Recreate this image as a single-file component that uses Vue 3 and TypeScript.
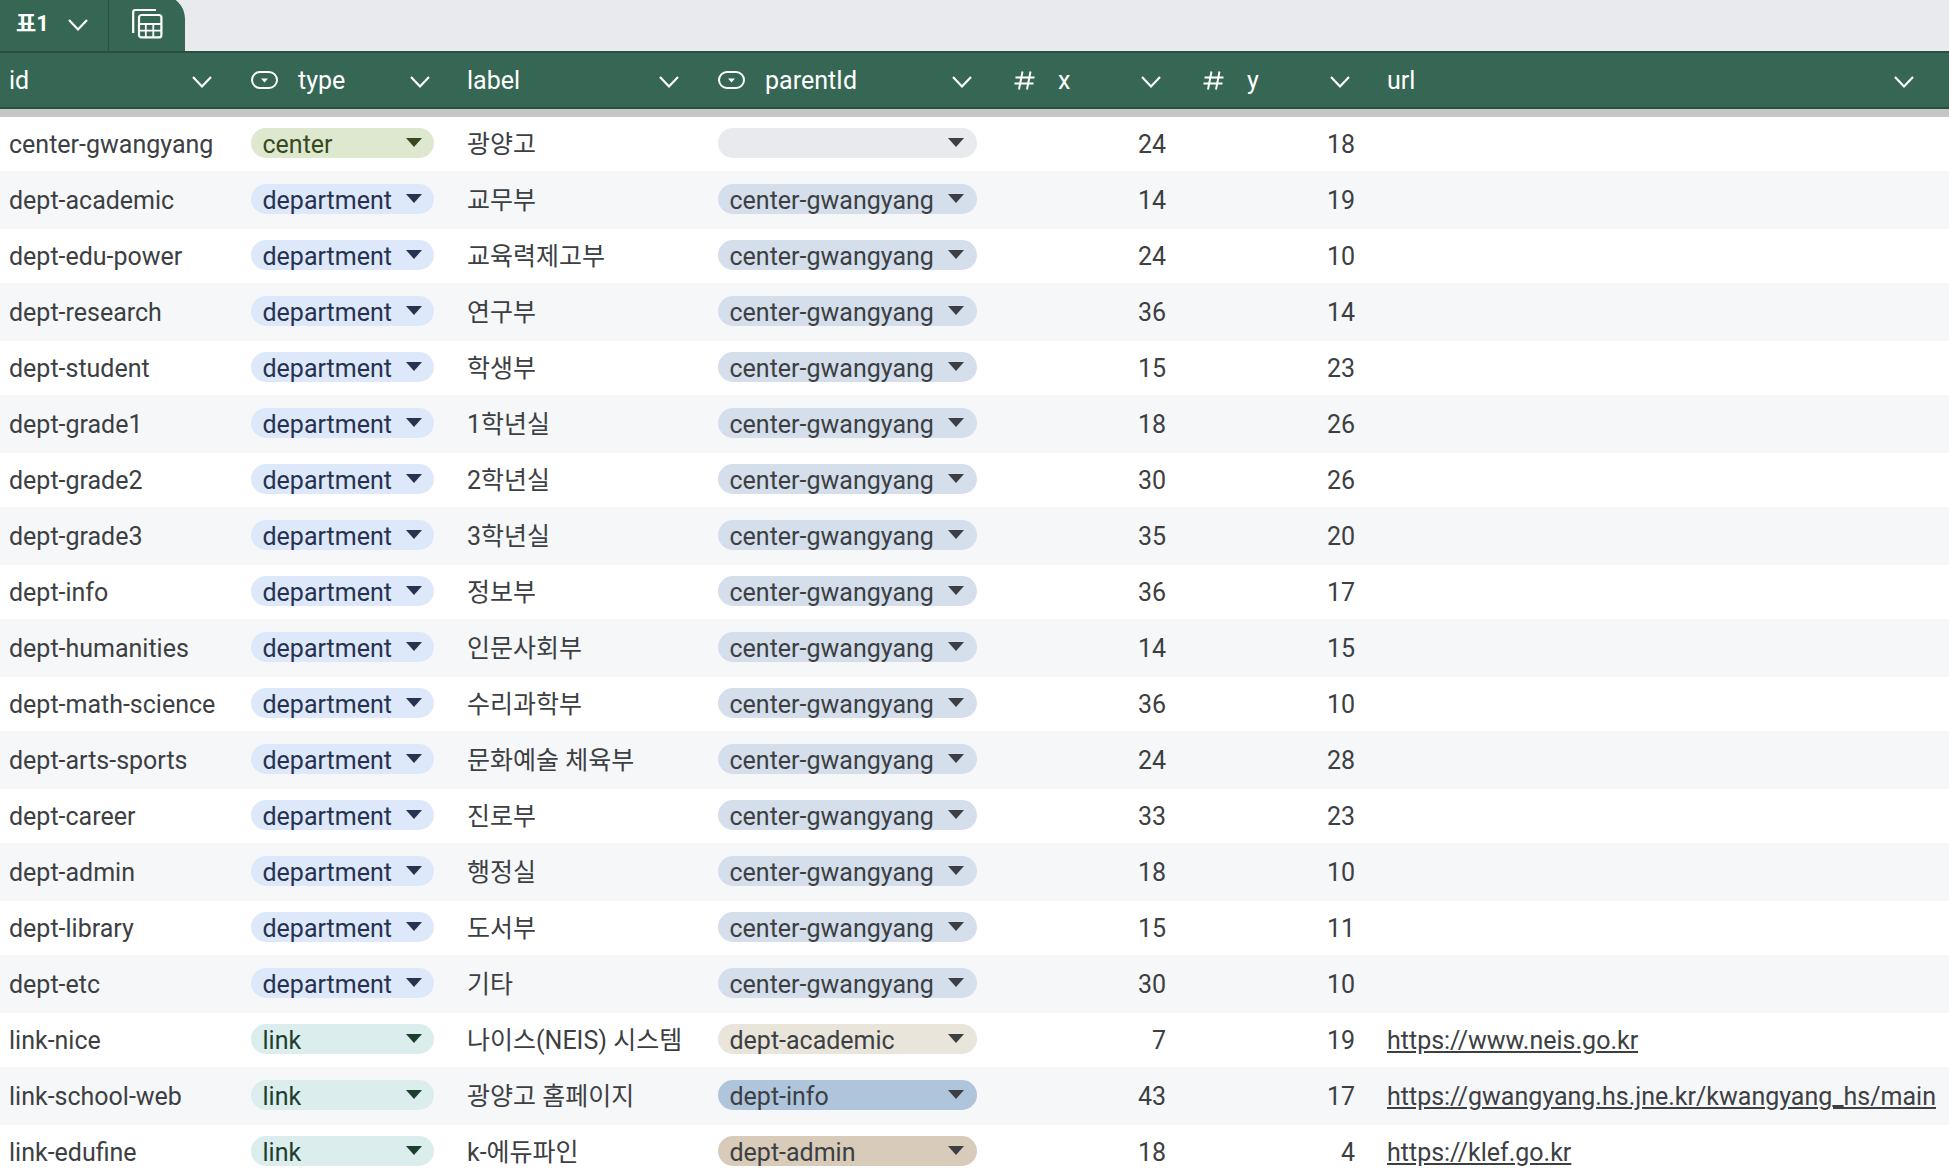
<script setup lang="ts">
interface Row {
  id: string
  type: 'center' | 'department' | 'link'
  label: string
  parentId: string
  x: number
  y: number
  url?: string
}

const C = 'center-gwangyang'

const columns = [
  { name: 'id', icon: '' },
  { name: 'type', icon: 'chip' },
  { name: 'label', icon: '' },
  { name: 'parentId', icon: 'chip' },
  { name: 'x', icon: 'hash' },
  { name: 'y', icon: 'hash' },
  { name: 'url', icon: '' },
]

const rows: Row[] = [
  { id: 'center-gwangyang', type: 'center', label: '광양고', parentId: '', x: 24, y: 18 },
  { id: 'dept-academic', type: 'department', label: '교무부', parentId: C, x: 14, y: 19 },
  { id: 'dept-edu-power', type: 'department', label: '교육력제고부', parentId: C, x: 24, y: 10 },
  { id: 'dept-research', type: 'department', label: '연구부', parentId: C, x: 36, y: 14 },
  { id: 'dept-student', type: 'department', label: '학생부', parentId: C, x: 15, y: 23 },
  { id: 'dept-grade1', type: 'department', label: '1학년실', parentId: C, x: 18, y: 26 },
  { id: 'dept-grade2', type: 'department', label: '2학년실', parentId: C, x: 30, y: 26 },
  { id: 'dept-grade3', type: 'department', label: '3학년실', parentId: C, x: 35, y: 20 },
  { id: 'dept-info', type: 'department', label: '정보부', parentId: C, x: 36, y: 17 },
  { id: 'dept-humanities', type: 'department', label: '인문사회부', parentId: C, x: 14, y: 15 },
  { id: 'dept-math-science', type: 'department', label: '수리과학부', parentId: C, x: 36, y: 10 },
  { id: 'dept-arts-sports', type: 'department', label: '문화예술 체육부', parentId: C, x: 24, y: 28 },
  { id: 'dept-career', type: 'department', label: '진로부', parentId: C, x: 33, y: 23 },
  { id: 'dept-admin', type: 'department', label: '행정실', parentId: C, x: 18, y: 10 },
  { id: 'dept-library', type: 'department', label: '도서부', parentId: C, x: 15, y: 11 },
  { id: 'dept-etc', type: 'department', label: '기타', parentId: C, x: 30, y: 10 },
  { id: 'link-nice', type: 'link', label: '나이스(NEIS) 시스템', parentId: 'dept-academic', x: 7, y: 19, url: 'https://www.neis.go.kr' },
  { id: 'link-school-web', type: 'link', label: '광양고 홈페이지', parentId: 'dept-info', x: 43, y: 17, url: 'https://gwangyang.hs.jne.kr/kwangyang_hs/main' },
  { id: 'link-edufine', type: 'link', label: 'k-에듀파인', parentId: 'dept-admin', x: 18, y: 4, url: 'https://klef.go.kr' },
]

// 부모 칩 색상은 값마다 다름
const parentClass = (p: string) => {
  if (!p) return 'p-empty'
  if (p === C) return 'p-center'
  return p.replace('dept-', 'p-')
}
</script>

<template>
  <div class="sheet">
    <div class="tabbar">
      <div class="tab">
        <div class="tab-name">
          <span class="tab-title">표1</span>
          <svg class="chev" viewBox="0 0 20 20"><path d="M1 5l9 9.5L19 5" /></svg>
        </div>
        <div class="tab-view">
          <svg width="32" height="32" viewBox="0 0 32 32" fill="none" stroke="#fff" stroke-width="2.2">
            <path d="M2.2 25V4.2Q2.2 2 4.4 2H25" />
            <rect x="8" y="7" width="22.4" height="22.4" rx="2.5" />
            <path d="M8 16H30M8 22.7H30M14.8 16V29M22.3 16V29" stroke-width="1.8" />
          </svg>
        </div>
      </div>
    </div>

    <div class="grid">
      <div class="head">
        <div v-for="c in columns" :key="c.name" class="hcell" :class="'col-' + c.name">
          <svg v-if="c.icon === 'chip'" class="hicon" viewBox="0 0 27 18" fill="none" stroke="#fff" stroke-width="2">
            <rect x="1" y="1" width="25" height="16" rx="8" />
            <path d="M10 7.5h7L13.5 11.5z" fill="#fff" stroke="none" />
          </svg>
          <svg v-else-if="c.icon === 'hash'" class="hash" viewBox="0 0 21 19" fill="none" stroke="#fff" stroke-width="2">
            <path d="M8.5 0.5 5 18.5M16.5 0.5 13 18.5M1.5 6.5H20.5M0.5 12.5H19.5" />
          </svg>
          <span class="hname">{{ c.name }}</span>
          <svg class="chev" viewBox="0 0 20 20"><path d="M1 5l9 9.5L19 5" /></svg>
        </div>
      </div>
      <div class="band"></div>

      <div v-for="r in rows" :key="r.id" class="row">
        <div class="cell col-id">{{ r.id }}</div>
        <div class="cell col-type">
          <div class="chip type-chip" :class="'t-' + r.type">
            <span>{{ r.type }}</span><i class="caret"></i>
          </div>
        </div>
        <div class="cell col-label">{{ r.label }}</div>
        <div class="cell col-parentId">
          <div class="chip parent-chip" :class="parentClass(r.parentId)">
            <span>{{ r.parentId }}</span><i class="caret"></i>
          </div>
        </div>
        <div class="cell num col-x">{{ r.x }}</div>
        <div class="cell num col-y">{{ r.y }}</div>
        <div class="cell col-url"><a v-if="r.url" :href="r.url">{{ r.url }}</a></div>
      </div>
    </div>
  </div>
</template>

<style scoped>
.sheet {
  width: 1949px;
  height: 1172px;
  overflow: hidden;
  background: #fff;
  font-family: Roboto, "Noto Sans CJK KR", sans-serif;
  font-size: 25px;
  line-height: 30px;
  color: #3c4043;
}
.tabbar {
  height: 51px;
  background: #e8eaed;
  display: flex;
  overflow: hidden;
}
.tab {
  display: flex;
  width: 185px;
  height: 56px;
  margin-top: -5px;
  flex: none;
  background: #366654;
  border-top-right-radius: 24px;
  color: #fff;
}
.tab-name {
  width: 109px;
  border-right: 1px solid #2a5141;
  display: flex;
  align-items: center;
  justify-content: space-between;
  padding: 0 20px 0 16px;
  box-sizing: border-box;
  font-size: 22px;
  font-weight: 700;
}
.tab-title { padding-top: 2px; }
.tab-view {
  flex: 1;
  padding: 13px 0 0 22px;
}
.chev {
  width: 20px;
  height: 20px;
  margin-top: 4px;
  fill: none;
  stroke: #fff;
  stroke-width: 2.2;
  flex: none;
}
.head, .row {
  display: grid;
  grid-template-columns: 242px 216px 251px 291px 189px 189px 571px;
}
.head {
  height: 58px;
  background: #366654;
  border-top: 2px solid #2a4f42;
  border-bottom: 2px solid #2a4f42;
  box-sizing: border-box;
  color: #fff;
}
.hcell {
  display: flex;
  align-items: center;
  padding: 0 30px 0 9px;
}
.col-type.hcell { padding-right: 28px; }
.col-parentId.hcell { padding-right: 28px; }
.col-x.hcell, .col-y.hcell { padding: 0 28px 0 14px; }
.col-url.hcell { padding-right: 35px; }
.hicon {
  width: 27px;
  height: 18px;
  margin-right: 20px;
  flex: none;
}
.hash {
  width: 21px;
  height: 19px;
  margin-right: 23px;
  flex: none;
}
.hname {
  flex: 1;
  padding-top: 2px;
}
.band {
  height: 8px;
  background: #c6c6c6;
}
/* 흰 행 54px, 회색 행 58px 번갈아 */
.row { height: 54px; }
.row:nth-child(even) {
  height: 58px;
  background: #f6f7f9;
}
.cell {
  display: flex;
  align-items: center;
  padding: 2px 9px 0;
  box-sizing: border-box;
  white-space: nowrap;
  overflow: hidden;
}
.col-type.cell { padding: 2px 24px 0 9px; }
.col-parentId.cell { padding: 2px 23px 0 9px; }
.num { justify-content: flex-end; padding-right: 23px; }
.chip {
  display: flex;
  align-items: center;
  justify-content: space-between;
  height: 30px;
  width: 100%;
  margin-bottom: 4px;
  border-radius: 15px;
  padding: 4px 12px 0 11.5px;
  box-sizing: border-box;
  line-height: 26px;
}
.parent-chip { padding-right: 13px; }
.caret {
  width: 0;
  height: 0;
  border-left: 8px solid transparent;
  border-right: 8px solid transparent;
  border-top: 9px solid currentColor;
  margin-top: -6px;
  flex: none;
}
.t-center { background: #dde8cf; color: #38491f; }
.t-department { background: #dde8fb; color: #27324d; }
.t-link { background: #dcedee; color: #1c3f2d; }
.p-empty { background: #e8eaed; }
.p-center { background: #d5deeb; }
.p-academic { background: #e9e5da; }
.p-info { background: #afc5dc; }
.p-admin { background: #d8cbb9; }
.col-url a { color: inherit; }
</style>

<style>
html, body { margin: 0; background: #fff; }
</style>
